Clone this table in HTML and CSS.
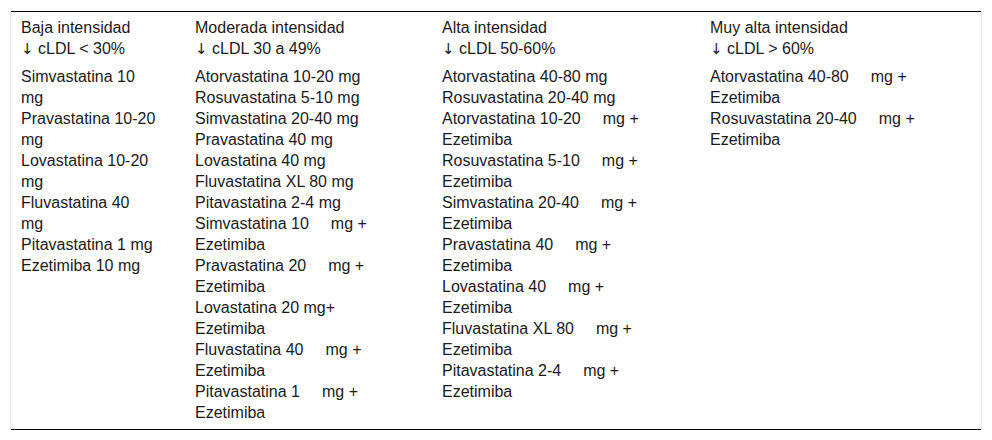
FILE: index.html
```html
<!DOCTYPE html>
<html lang="es">
<head>
<meta charset="utf-8">
<title>Intensidad de estatinas</title>
<link rel="stylesheet" href="styles.css">
</head>
<body>
<div class="frame">
  <table class="tbl">
    <colgroup>
      <col class="c1"><col class="c2"><col class="c3"><col class="c4">
    </colgroup>
    <thead>
      <tr>
        <th>Baja intensidad<br><span class="arrow">↓</span> cLDL &lt; 30%</th>
        <th>Moderada intensidad<br><span class="arrow">↓</span> cLDL 30 a 49%</th>
        <th>Alta intensidad<br><span class="arrow">↓</span> cLDL 50-60%</th>
        <th>Muy alta intensidad<br><span class="arrow">↓</span> cLDL &gt; 60%</th>
      </tr>
    </thead>
    <tbody>
      <tr>
        <td>Simvastatina 10<br>mg<br>Pravastatina 10-20<br>mg<br>Lovastatina 10-20<br>mg<br>Fluvastatina 40<br>mg<br>Pitavastatina 1 mg<br>Ezetimiba 10 mg</td>
        <td>Atorvastatina 10-20 mg<br>Rosuvastatina 5-10 mg<br>Simvastatina 20-40 mg<br>Pravastatina 40 mg<br>Lovastatina 40 mg<br>Fluvastatina XL 80 mg<br>Pitavastatina 2-4 mg<br>Simvastatina 10<span class="gap"></span>mg + Ezetimiba<br>Pravastatina 20<span class="gap"></span>mg + Ezetimiba<br>Lovastatina 20 mg+ Ezetimiba<br>Fluvastatina 40<span class="gap"></span>mg + Ezetimiba<br>Pitavastatina 1<span class="gap"></span>mg + Ezetimiba</td>
        <td>Atorvastatina 40-80 mg<br>Rosuvastatina 20-40 mg<br>Atorvastatina 10-20<span class="gap"></span>mg + Ezetimiba<br>Rosuvastatina 5-10<span class="gap"></span>mg + Ezetimiba<br>Simvastatina 20-40<span class="gap"></span>mg + Ezetimiba<br>Pravastatina 40<span class="gap"></span>mg + Ezetimiba<br>Lovastatina 40<span class="gap"></span>mg + Ezetimiba<br>Fluvastatina XL 80<span class="gap"></span>mg + Ezetimiba<br>Pitavastatina 2-4<span class="gap"></span>mg + Ezetimiba</td>
        <td>Atorvastatina 40-80<span class="gap"></span>mg + Ezetimiba<br>Rosuvastatina 20-40<span class="gap"></span>mg + Ezetimiba</td>
      </tr>
    </tbody>
  </table>
</div>
</body>
</html>
```
FILE: styles.css
```css
html, body {
  margin: 0;
  padding: 0;
  background: #fff;
}
body {
  padding: 11px 10px 0 10px;
  font-family: "Liberation Sans", Arial, sans-serif;
  font-size: 16px;
  color: #1a1a1a;
}
.frame {
  width: 970px;
  border-left: 1px solid #e6e6e6;
  border-right: 1px solid #e6e6e6;
}
.tbl {
  width: 970px;
  border-collapse: collapse;
  table-layout: fixed;
  border-top: 1px solid #000;
  border-bottom: 1px solid #000;
}
.c1 { width: 174px; }
.c2 { width: 247px; }
.c3 { width: 268px; }
.c4 { width: 281px; }
.tbl th,
.tbl td {
  text-align: left;
  vertical-align: top;
  font-weight: normal;
  line-height: 21px;
  padding: 0 28px 0 10px;
}
.tbl th:first-child,
.tbl td:first-child {
  padding-right: 16px;
}
.tbl th {
  padding-top: 5px;
  padding-bottom: 2px;
}
.tbl td {
  padding-top: 4px;
  padding-bottom: 6px;
}
.arrow {
  font-family: "DejaVu Sans", sans-serif;
  font-size: 15px;
  color: #1a1a1a;
}
.gap {
  display: inline-block;
  width: 22px;
}
```
